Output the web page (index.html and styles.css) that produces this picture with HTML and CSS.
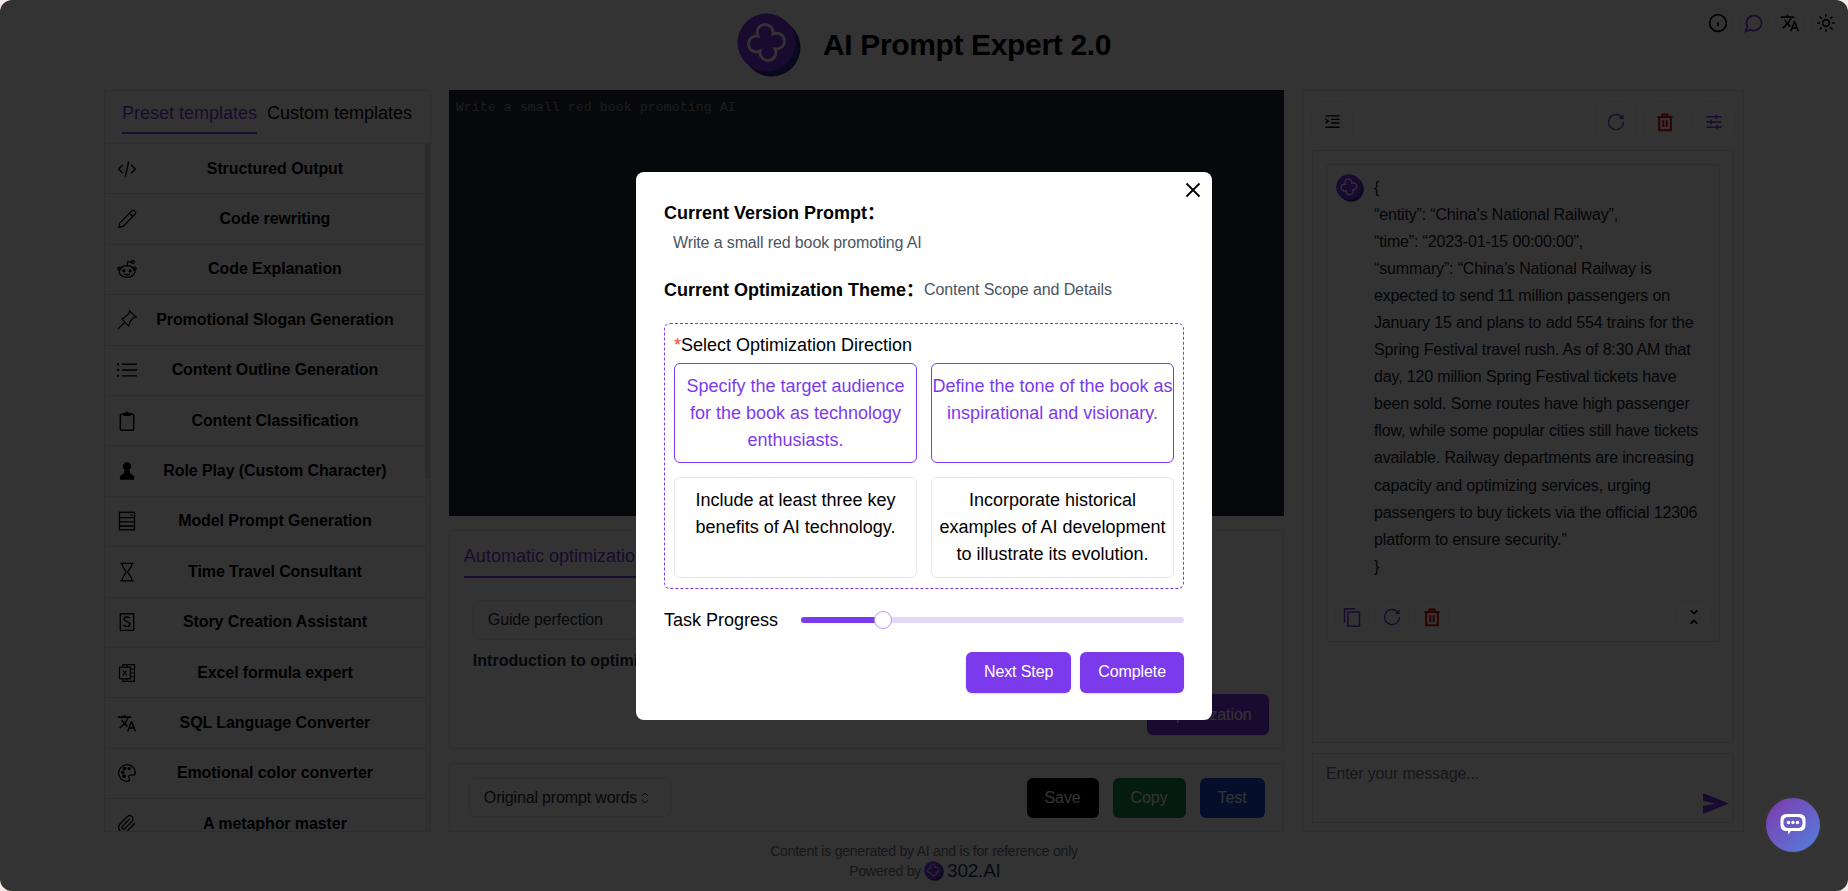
FILE: index.html
```html
<!DOCTYPE html>
<html lang="en">
<head>
    <meta charset="UTF-8">
    <meta name="viewport" content="width=device-width, initial-scale=1.0">
    <title>AI Prompt Expert 2.0</title>
    <link rel="stylesheet" href="styles.css">
</head>
<body>
    <svg class="defs" width="0" height="0">
        <symbol id="logo" viewBox="0 0 64 64">
            <circle cx="34.5" cy="34.5" r="29" fill="#2f2a8f"/>
            <circle cx="29.5" cy="29.5" r="29" fill="#7c3aed"/>
            <g transform="translate(29.5 29.5) rotate(-8)">
                <path d="M7.6 -7.6 A8 8 0 1 1 7.6 7.6 A8 8 0 1 1 -7.6 7.6 A8 8 0 1 1 -7.6 -7.6 A8 8 0 1 1 7.6 -7.6Z" fill="none" stroke="#fff" stroke-width="2.8"/>
            </g>
        </symbol>
        <symbol id="refresh" viewBox="0 0 24 24">
            <path d="M21 12a9 9 0 1 1-2.8-6.5L21 8" fill="none" stroke="currentColor" stroke-width="1.6"/>
            <path d="M21 3v5.5h-5.5z" fill="currentColor"/>
        </symbol>
        <symbol id="trash" viewBox="0 0 24 24">
            <path d="M3 6h18M9 6V3h6v3M5 6v16h14V6M10 10v8M14 10v8" fill="none" stroke="currentColor" stroke-width="2.4"/>
        </symbol>
    </svg>

    <div class="page">
        <header class="top">
            <div></div>
            <div class="brand">
                <svg class="brand-logo"><use href="#logo"/></svg>
                <h1>AI Prompt Expert 2.0</h1>
            </div>
            <div class="top-tools">
                <span class="round-btn">
                    <svg viewBox="0 0 24 24" fill="none" stroke="currentColor" stroke-width="2"><circle cx="12" cy="12" r="10"/><path d="M12 16v-5M12 8h.01"/></svg>
                </span>
                <span class="round-btn purple">
                    <svg viewBox="0 0 24 24" fill="none" stroke="currentColor" stroke-width="2"><path d="M7.9 20A9 9 0 1 0 4 16.1L2 22Z"/></svg>
                </span>
                <span class="round-btn">
                    <svg viewBox="0 0 24 24" fill="currentColor"><path d="M12.87 15.07l-2.54-2.51.03-.03c1.74-1.94 2.98-4.17 3.71-6.53H17V4h-7V2H8v2H1v1.99h11.17C11.5 7.92 10.44 9.75 9 11.35 8.07 10.32 7.3 9.19 6.69 8h-2c.73 1.63 1.73 3.17 2.98 4.56l-5.09 5.02L4 19l5-5 3.11 3.11.76-2.04zM18.5 10h-2L12 22h2l1.12-3h4.75L21 22h2l-4.5-12zm-2.62 7l1.62-4.33L19.12 17h-3.24z"/></svg>
                </span>
                <span class="round-btn">
                    <svg viewBox="0 0 24 24" fill="none" stroke="currentColor" stroke-width="2" stroke-linecap="round"><circle cx="12" cy="12" r="4"/><path d="M12 2v2M12 20v2M4.9 4.9l1.4 1.4M17.7 17.7l1.4 1.4M2 12h2M20 12h2M6.3 17.7l-1.4 1.4M19.1 4.9l-1.4 1.4"/></svg>
                </span>
            </div>
        </header>

        <main class="columns">
            <aside class="side panel">
                <div class="side-tabs">
                    <span class="tab active">Preset templates</span>
                    <span class="tab">Custom templates</span>
                </div>
                <div class="side-body">
                    <ul class="tpl-list">
                        <li><svg viewBox="0 0 24 24" fill="none" stroke="currentColor" stroke-width="1.6"><path d="M7 7l-5 5 5 5M17 7l5 5-5 5M14 3l-4 18"/></svg><span>Structured Output</span></li>
                        <li><svg viewBox="0 0 24 24" fill="none" stroke="currentColor" stroke-width="1.5"><path d="M17.5 2.5a2.8 2.8 0 0 1 4 4L7.5 20.5 2 22l1.5-5.5ZM15 5l4 4"/></svg><span>Code rewriting</span></li>
                        <li><svg viewBox="0 0 24 24" fill="none" stroke="currentColor" stroke-width="1.5"><ellipse cx="12" cy="15" rx="9.5" ry="7"/><circle cx="2.8" cy="11.5" r="1.8"/><circle cx="21.2" cy="11.5" r="1.8"/><path d="M12 8l1-5 4 1"/><circle cx="19" cy="3.5" r="1.7"/><circle cx="8.2" cy="14" r="1.3" fill="currentColor"/><circle cx="15.8" cy="14" r="1.3" fill="currentColor"/><path d="M8.5 18.2c2 1 5 1 7 0"/></svg><span>Code Explanation</span></li>
                        <li><svg viewBox="0 0 24 24" fill="none" stroke="currentColor" stroke-width="1.4"><path d="M1 23l8-8"/><path d="M6 11l8 8 1.5-5 4.5-5 3-.5L15 1l-.5 3-5 4.500z"/></svg><span>Promotional Slogan Generation</span></li>
                        <li><svg viewBox="0 0 24 24" fill="none" stroke="currentColor" stroke-width="1.7"><path d="M6 5h18M6 12h18M6 19h18"/><path d="M0 5h2.500M0 12h2.500M0 19h2.500" stroke-width="2.400"/></svg><span>Content Outline Generation</span></li>
                        <li><svg viewBox="0 0 24 24" fill="none" stroke="currentColor" stroke-width="1.800"><rect x="4" y="4" width="16" height="19" rx="1.500"/><path d="M8.500 5V3h2.200l1.300-1.500L13.300 3h2.200v2z" fill="currentColor"/></svg><span>Content Classification</span></li>
                        <li><svg viewBox="0 0 24 24" fill="currentColor"><circle cx="12" cy="6.500" r="5"/><path d="M9 11h6l1 4 4.500 3v4.500h-17V18L8 15z"/></svg><span>Role Play (Custom Character)</span></li>
                        <li><svg viewBox="0 0 24 24" fill="none" stroke="currentColor" stroke-width="1.600"><rect x="3" y="1.500" width="18" height="21"/><path d="M3 8h18M3 13h18M3 18h18"/><path d="M16.500 4.800h2" stroke-width="2"/></svg><span>Model Prompt Generation</span></li>
                        <li><svg viewBox="0 0 24 24" fill="none" stroke="currentColor" stroke-width="1.500"><path d="M4 1.500h16M4 22.500h16M6 1.500c0 6 5 8 5 10.500s-5 4.500-5 10.500M18 1.500c0 6-5 8-5 10.500s5 4.500 5 10.500"/></svg><span>Time Travel Consultant</span></li>
                        <li><svg viewBox="0 0 24 24" fill="none" stroke="currentColor" stroke-width="1.700"><path d="M4 2h16v20H4z"/><path d="M15.500 7.500C15 6 13.500 6 12 6s-3.500.5-3.500 2.500c0 3.500 7 2.500 7 6 0 2-1.500 3-3.500 3s-3.500-.8-4-2.300"/></svg><span>Story Creation Assistant</span></li>
                        <li><svg viewBox="0 0 24 24" fill="none" stroke="currentColor" stroke-width="1.400"><path d="M7 5V2h14v20H7v-3"/><rect x="3" y="5" width="13" height="14"/><path d="M16 7.500h5M16 12h5M16 16.500h5M12 2v3M12 19v3M7 9l4.500 6M11.500 9L7 15"/></svg><span>Excel formula expert</span></li>
                        <li><svg viewBox="0 0 24 24" fill="currentColor"><path d="M12.870 15.070l-2.540-2.510.03-.03c1.740-1.940 2.980-4.170 3.710-6.530H17V4h-7V2H8v2H1v1.990h11.170C11.500 7.920 10.440 9.750 9 11.350 8.070 10.320 7.300 9.190 6.690 8h-2c.73 1.630 1.730 3.170 2.980 4.560l-5.090 5.020L4 19l5-5 3.110 3.110.76-2.040zM18.500 10h-2L12 22h2l1.120-3h4.750L21 22h2l-4.500-12zm-2.620 7l1.620-4.330L19.120 17h-3.240z"/></svg><span>SQL Language Converter</span></li>
                        <li><svg viewBox="0 0 24 24" fill="none" stroke="currentColor" stroke-width="1.600"><path d="M12 2a10 10 0 1 0 0 20c2 0 3-1 3-2.500 0-1-1-1.800-1-3 0-1.200 1-2 2.500-2H19c1.800 0 3-1.200 3-3C22 6 17.500 2 12 2z"/><circle cx="7" cy="11" r="1.300" fill="currentColor"/><circle cx="9" cy="6.500" r="1.300" fill="currentColor"/><circle cx="14.500" cy="6.500" r="1.300" fill="currentColor"/><circle cx="8.500" cy="16" r="1.600" fill="currentColor"/></svg><span>Emotional color converter</span></li>
                        <li><svg viewBox="0 0 24 24" fill="none" stroke="currentColor" stroke-width="1.600"><path d="M21.440 11.050l-9.190 9.190a6 6 0 0 1-8.490-8.490l8.570-8.570A4 4 0 1 1 18 8.840l-8.590 8.570a2 2 0 0 1-2.830-2.830l8.490-8.480"/></svg><span>A metaphor master</span></li>
                    </ul>
                    <div class="rail"><div class="rail-thumb"></div></div>
                </div>
            </aside>

            <section class="center">
                <textarea class="editor" placeholder="Write a small red book promoting AI"></textarea>

                <div class="opt panel">
                    <div class="opt-tabs">
                        <span class="tab active">Automatic optimization</span>
                    </div>
                    <div class="opt-body">
                        <div class="select wide">Guide perfection</div>
                        <p class="opt-intro">Introduction to optimization</p>
                    </div>
                    <div class="opt-foot">
                        <button class="btn primary">Optimization</button>
                    </div>
                </div>

                <div class="actions panel">
                    <div class="select">
                        Original prompt words
                        <svg class="updown" viewBox="0 0 10 16" fill="none" stroke="currentColor" stroke-width="1"><path d="M2 6l3-3 3 3M2 10l3 3 3-3"/></svg>
                    </div>
                    <div class="actions-btns">
                        <button class="btn black">Save</button>
                        <button class="btn green">Copy</button>
                        <button class="btn blue">Test</button>
                    </div>
                </div>
            </section>

            <aside class="chat panel">
                <div class="chat-tools">
                    <span class="tool-btn">
                        <svg class="indent" viewBox="0 0 24 24" fill="none" stroke="currentColor" stroke-width="2"><path d="M2 4h20M10 9h12M10 14h12M2 20h20M2 8.500l4 3-4 3"/></svg>
                    </span>
                    <span class="tool-btn purple right-start"><svg><use href="#refresh"/></svg></span>
                    <span class="tool-btn red"><svg><use href="#trash"/></svg></span>
                    <span class="tool-btn purple">
                        <svg class="sliders" viewBox="0 0 24 24" fill="none" stroke="currentColor" stroke-width="2.200"><path d="M2 5h20M2 12h20M2 19h20M15 2v6M8 9v6M16 16v6"/></svg>
                    </span>
                </div>
                <div class="chat-log">
                    <div class="msg">
                        <div class="msg-main">
                            <svg class="avatar"><use href="#logo"/></svg>
                            <div class="msg-text">
                                <p>{</p>
                                <p>“entity”: “China’s National Railway”,</p>
                                <p>“time”: “2023-01-15 00:00:00”,</p>
                                <p>“summary”: “China’s National Railway is expected to send 11 million passengers on January 15 and plans to add 554 trains for the Spring Festival travel rush. As of 8:30 AM that day, 120 million Spring Festival tickets have been sold. Some routes have high passenger flow, while some popular cities still have tickets available. Railway departments are increasing capacity and optimizing services, urging passengers to buy tickets via the official 12306 platform to ensure security.”</p>
                                <p>}</p>
                            </div>
                        </div>
                        <div class="msg-tools">
                            <span class="mini-btn purple">
                                <svg viewBox="0 0 24 24" fill="none" stroke="currentColor" stroke-width="1.800"><path d="M3 19V2h13"/><rect x="7" y="6" width="14" height="17"/></svg>
                            </span>
                            <span class="mini-btn purple"><svg><use href="#refresh"/></svg></span>
                            <span class="mini-btn red"><svg><use href="#trash"/></svg></span>
                            <span class="mini-btn right-start">
                                <svg viewBox="0 0 24 24" fill="none" stroke="currentColor" stroke-width="2"><path d="M8 4l4 4 4-4M8 20l4-4 4 4"/></svg>
                            </span>
                        </div>
                    </div>
                </div>
                <div class="chat-input">
                    <textarea placeholder="Enter your message..."></textarea>
                    <svg class="send" viewBox="0 0 26 21"><path d="M0 0l26 10.500L0 21v-8l12-2.500L0 8z"/></svg>
                </div>
            </aside>
        </main>

        <footer class="foot">
            <div>Content is generated by AI and is for reference only</div>
            <div class="powered">Powered by <svg><use href="#logo"/></svg><b>302.AI</b></div>
        </footer>
    </div>

    <div class="overlay">
        <div class="modal">
            <svg class="close" viewBox="0 0 16 16" fill="none" stroke="#000" stroke-width="1.800"><path d="M1.500 1.500l13 13M14.500 1.500l-13 13"/></svg>
            <h3>Current Version Prompt：</h3>
            <p class="prompt-text">Write a small red book promoting AI</p>
            <div class="theme">
                <h3>Current Optimization Theme：</h3>
                <span>Content Scope and Details</span>
            </div>
            <div class="direction">
                <div class="direction-label"><i>*</i>Select Optimization Direction</div>
                <div class="options">
                    <div class="option on">Specify the target audience for the book as technology enthusiasts.</div>
                    <div class="option on">Define the tone of the book as inspirational and visionary.</div>
                    <div class="option">Include at least three key benefits of AI technology.</div>
                    <div class="option">Incorporate historical examples of AI development to illustrate its evolution.</div>
                </div>
            </div>
            <div class="progress">
                <span>Task Progress</span>
                <div class="track">
                    <div class="fill" style="width: 21.4%"><b class="thumb"></b></div>
                </div>
            </div>
            <div class="modal-btns">
                <button class="btn primary">Next Step</button>
                <button class="btn primary">Complete</button>
            </div>
        </div>
    </div>

    <div class="fab">
        <svg viewBox="0 0 26 24">
            <path d="M6 1h14a5.500 5.500 0 0 1 5.500 5.500v6a5.500 5.500 0 0 1-5.500 5.500H11l-3 3.500V18H6a5.500 5.500 0 0 1-5.500-5.500v-6A5.500 5.500 0 0 1 6 1z" fill="#fff"/>
            <rect x="3.500" y="4" width="19" height="11" rx="4.500" fill="#6a5ac6"/>
            <circle cx="8.500" cy="9.500" r="1.700" fill="#fff"/>
            <circle cx="13" cy="9.500" r="1.700" fill="#fff"/>
            <circle cx="17.500" cy="9.500" r="1.700" fill="#fff"/>
        </svg>
    </div>
</body>
</html>
```

FILE: styles.css
```css
* {
    box-sizing: border-box;
}
html, body {
    margin: 0;
    height: 100%;
    overflow: hidden;
}
body {
    font-family: "Liberation Sans", Arial, sans-serif;
    font-size: 16px;
    color: #000;
    background-color: #f6e9e8;
}
.defs {
    position: absolute;
}
.page {
    height: 100vh;
    background: #fff;
    border-radius: 12px;
}

/* header */
.top {
    height: 90px;
    display: grid;
    grid-template-columns: 1fr auto 1fr;
}
.brand {
    display: flex;
    align-items: center;
    gap: 22px;
}
.brand-logo {
    width: 64px;
    height: 64px;
}
.brand h1 {
    margin: 0;
    font-size: 30px;
    font-weight: bold;
    letter-spacing: -0.35px;
}
.top-tools {
    justify-self: end;
    display: flex;
    gap: 8px;
    padding: 9px 8px 0 0;
}
.round-btn {
    width: 28px;
    height: 28px;
    border-radius: 50%;
    display: flex;
    align-items: center;
    justify-content: center;
    box-shadow: 0 0 3px rgba(0, 0, 0, 0.12);
}
.round-btn svg {
    width: 20px;
    height: 20px;
}
.purple {
    color: #7c3aed;
}
.red {
    color: #e80000;
}

/* columns */
.columns {
    width: 1640px;
    height: 742px;
    margin: 0 auto;
    display: flex;
    gap: 18px;
}
.panel {
    border: 1px solid #e5e7eb;
    background: #fff;
}
.side {
    width: 327px;
    display: flex;
    flex-direction: column;
}
.side-tabs {
    height: 53px;
    flex-shrink: 0;
    display: flex;
    gap: 10px;
    padding: 8px 0 0 17px;
    border-bottom: 1px solid #e5e7eb;
}
.side-tabs .tab {
    padding-top: 1px;
}
.tab {
    height: 35px;
    font-size: 18px;
    line-height: 27px;
    white-space: nowrap;
}
.tab.active {
    color: #7c3aed;
    border-bottom: 2px solid #7c3aed;
}
.side-body {
    flex: 1;
    display: flex;
    min-height: 0;
}
.tpl-list {
    flex: 1;
    margin: 0;
    padding: 0;
    list-style: none;
    overflow: hidden;
}
.tpl-list li {
    height: 50.4px;
    display: flex;
    align-items: center;
    padding: 0 12px;
    border-bottom: 1px solid #e5e7eb;
}
.tpl-list svg {
    width: 20px;
    height: 20px;
    flex-shrink: 0;
}
.tpl-list span {
    flex: 1;
    text-align: center;
    font-weight: bold;
    letter-spacing: -0.09px;
}
.rail {
    width: 5px;
    background: #f5f5f5;
}
.rail-thumb {
    height: 335px;
    background: #d4d4d8;
}

/* center */
.center {
    width: 835px;
    display: flex;
    flex-direction: column;
    gap: 14px;
}
.editor {
    height: 426px;
    display: block;
    width: 100%;
    padding: 10px 7px;
    border: 0;
    resize: none;
    background: #252a38;
    font-family: "Liberation Mono", monospace;
    font-size: 13.33px;
}
.editor::placeholder {
    color: #8f8f8f;
}
.opt {
    height: 219px;
    display: flex;
    flex-direction: column;
}
.opt-tabs {
    padding: 12px 0 0 14px;
    height: 48px;
}
.opt-tabs .tab {
    display: inline-block;
}
.opt-body {
    padding: 21px 0 0 23px;
}
.select {
    height: 39px;
    display: flex;
    align-items: center;
    padding: 0 14px;
    border: 1px solid #e5e7eb;
    border-radius: 6px;
    color: #1f2937;
    letter-spacing: -0.15px;
}
.select.wide {
    height: 40px;
    width: 400px;
}
.updown {
    width: 10px;
    height: 16px;
    margin-left: 3px;
}
.opt-intro {
    margin: 9px 0 0;
    line-height: 24px;
    font-weight: bold;
    color: #1f2937;
}
.opt-foot {
    margin-top: auto;
    padding: 0 14px 13px;
    display: flex;
    justify-content: flex-end;
}
.btn {
    height: 41px;
    padding: 0 18px;
    border: 0;
    border-radius: 6px;
    color: #fff;
    font-family: inherit;
    font-size: 16px;
    letter-spacing: -0.1px;
}
.primary {
    background: #7c3aed;
    box-shadow: 0 1px 2px rgba(0, 0, 0, 0.15);
}
.opt-foot .btn {
    padding: 0 17px;
}
.black {
    background: #000;
}
.green {
    background: #158a41;
}
.blue {
    background: #1d4ed8;
}
.actions {
    height: 69px;
    display: flex;
    align-items: center;
    justify-content: space-between;
    padding: 0 18px 0 19px;
}
.actions .select {
    width: 202px;
}
.actions .btn {
    height: 40px;
}
.actions-btns {
    display: flex;
    gap: 14px;
}

/* chat column */
.chat {
    width: 442px;
    margin-left: 0.5px;
    display: flex;
    flex-direction: column;
    padding: 11px 9px 8px;
}
.chat-tools {
    display: flex;
    gap: 9px;
    margin-bottom: 9px;
}
.tool-btn {
    width: 40px;
    height: 39px;
    border-radius: 8px;
    display: flex;
    align-items: center;
    justify-content: center;
    box-shadow: 0 0 3px rgba(0, 0, 0, 0.12);
}
.tool-btn svg {
    width: 20px;
    height: 20px;
}
.tool-btn svg.indent {
    width: 17px;
    height: 17px;
}
.tool-btn svg.sliders {
    width: 18px;
    height: 18px;
}
.right-start {
    margin-left: auto;
}
.chat-log {
    height: 593px;
    padding: 13px;
    border: 1px solid #e5e7eb;
}
.msg {
    height: 478px;
    padding: 9px 9px 10px;
    border: 1px solid #e5e7eb;
    display: flex;
    flex-direction: column;
}
.msg-main {
    display: flex;
    gap: 10px;
}
.avatar {
    width: 28px;
    height: 28px;
    flex-shrink: 0;
}
.msg-text {
    width: 336px;
    line-height: 27.05px;
    letter-spacing: -0.15px;
    color: #111827;
}
.msg-text p {
    margin: 0;
}
.msg-tools {
    margin-top: auto;
    display: flex;
    gap: 8px;
}
.mini-btn {
    width: 32px;
    height: 29px;
    border-radius: 6px;
    display: flex;
    align-items: center;
    justify-content: center;
    box-shadow: 0 0 3px rgba(0, 0, 0, 0.12);
}
.mini-btn svg {
    width: 20px;
    height: 20px;
}
.chat-input {
    position: relative;
    height: 70px;
    margin-top: 10px;
    border: 1px solid #e5e7eb;
}
.chat-input textarea {
    display: block;
    width: 100%;
    height: 100%;
    padding: 11px 13px;
    border: 0;
    resize: none;
    background: transparent;
    font-family: inherit;
    font-size: 16px;
    letter-spacing: -0.17px;
}
.chat-input textarea::placeholder {
    color: #6b7280;
}
.send {
    position: absolute;
    right: 4px;
    bottom: 8px;
    width: 26px;
    height: 21px;
    fill: #7c3aed;
}

/* footer */
.foot {
    padding-top: 9px;
    text-align: center;
    font-size: 14px;
    line-height: 20px;
    letter-spacing: -0.22px;
    color: #6b7280;
}
.powered {
    display: flex;
    align-items: center;
    justify-content: center;
    gap: 3px;
    padding-left: 2px;
}
.powered svg {
    width: 20px;
    height: 20px;
}
.powered b {
    font-weight: normal;
    font-size: 19px;
    color: #1f2f5f;
}

/* modal */
.overlay {
    position: fixed;
    inset: 0;
    display: flex;
    align-items: center;
    justify-content: center;
    background: rgba(0, 0, 0, 0.8);
    border-radius: 12px;
}
.modal {
    position: relative;
    width: 576px;
    padding: 29px 28px 27px;
    background: #fff;
    border-radius: 8px;
}
.close {
    position: absolute;
    top: 10px;
    right: 11px;
    width: 16px;
    height: 16px;
}
.modal h3 {
    margin: 0;
    font-size: 18px;
    line-height: 24px;
    font-weight: bold;
    font-family: "Liberation Sans", "Noto Sans CJK SC", sans-serif;
}
.prompt-text {
    margin: 6px 0 0 9px;
    line-height: 24px;
    letter-spacing: -0.13px;
    color: #4b5563;
}
.theme {
    display: flex;
    align-items: center;
    margin-top: 23px;
    letter-spacing: -0.1px;
    color: #4b5563;
}
.theme h3 {
    color: #000;
    letter-spacing: 0;
}
.direction {
    margin-top: 21px;
    padding: 9px 9px 10px;
    border: 1px dashed #7c3aed;
    border-radius: 6px;
    font-size: 18px;
}
.direction-label {
    line-height: 24px;
    margin-bottom: 6px;
}
.direction-label i {
    font-style: normal;
    color: #ef4444;
}
.options {
    display: grid;
    grid-template-columns: 1fr 1fr;
    gap: 14px;
}
.option {
    height: 100.5px;
    padding: 9px 0;
    border: 1px solid #e5e7eb;
    border-radius: 6px;
    line-height: 27px;
    text-align: center;
}
.option.on {
    border-color: #7c3aed;
    color: #7c3aed;
}
.progress {
    display: flex;
    align-items: center;
    gap: 23px;
    margin-top: 19px;
    line-height: 24px;
    font-size: 18px;
}
.track {
    flex: 1;
    height: 6px;
    border-radius: 3px;
    background: #e4d7fa;
}
.fill {
    position: relative;
    height: 100%;
    border-radius: 3px;
    background: #7c3aed;
}
.thumb {
    position: absolute;
    right: -9px;
    top: -6px;
    width: 18px;
    height: 18px;
    border: 1px solid #b794f6;
    border-radius: 50%;
    background: #fff;
}
.modal-btns {
    display: flex;
    justify-content: flex-end;
    gap: 9px;
    margin-top: 20px;
}

/* floating help */
.fab {
    position: fixed;
    right: 28px;
    bottom: 39px;
    width: 54px;
    height: 54px;
    border-radius: 50%;
    display: flex;
    align-items: center;
    justify-content: center;
    background: linear-gradient(135deg, #7e39ab, #5480dd);
    box-shadow: 0 0 8px rgba(255, 255, 255, 0.04);
}
.fab svg {
    width: 26px;
    height: 24px;
}
```
